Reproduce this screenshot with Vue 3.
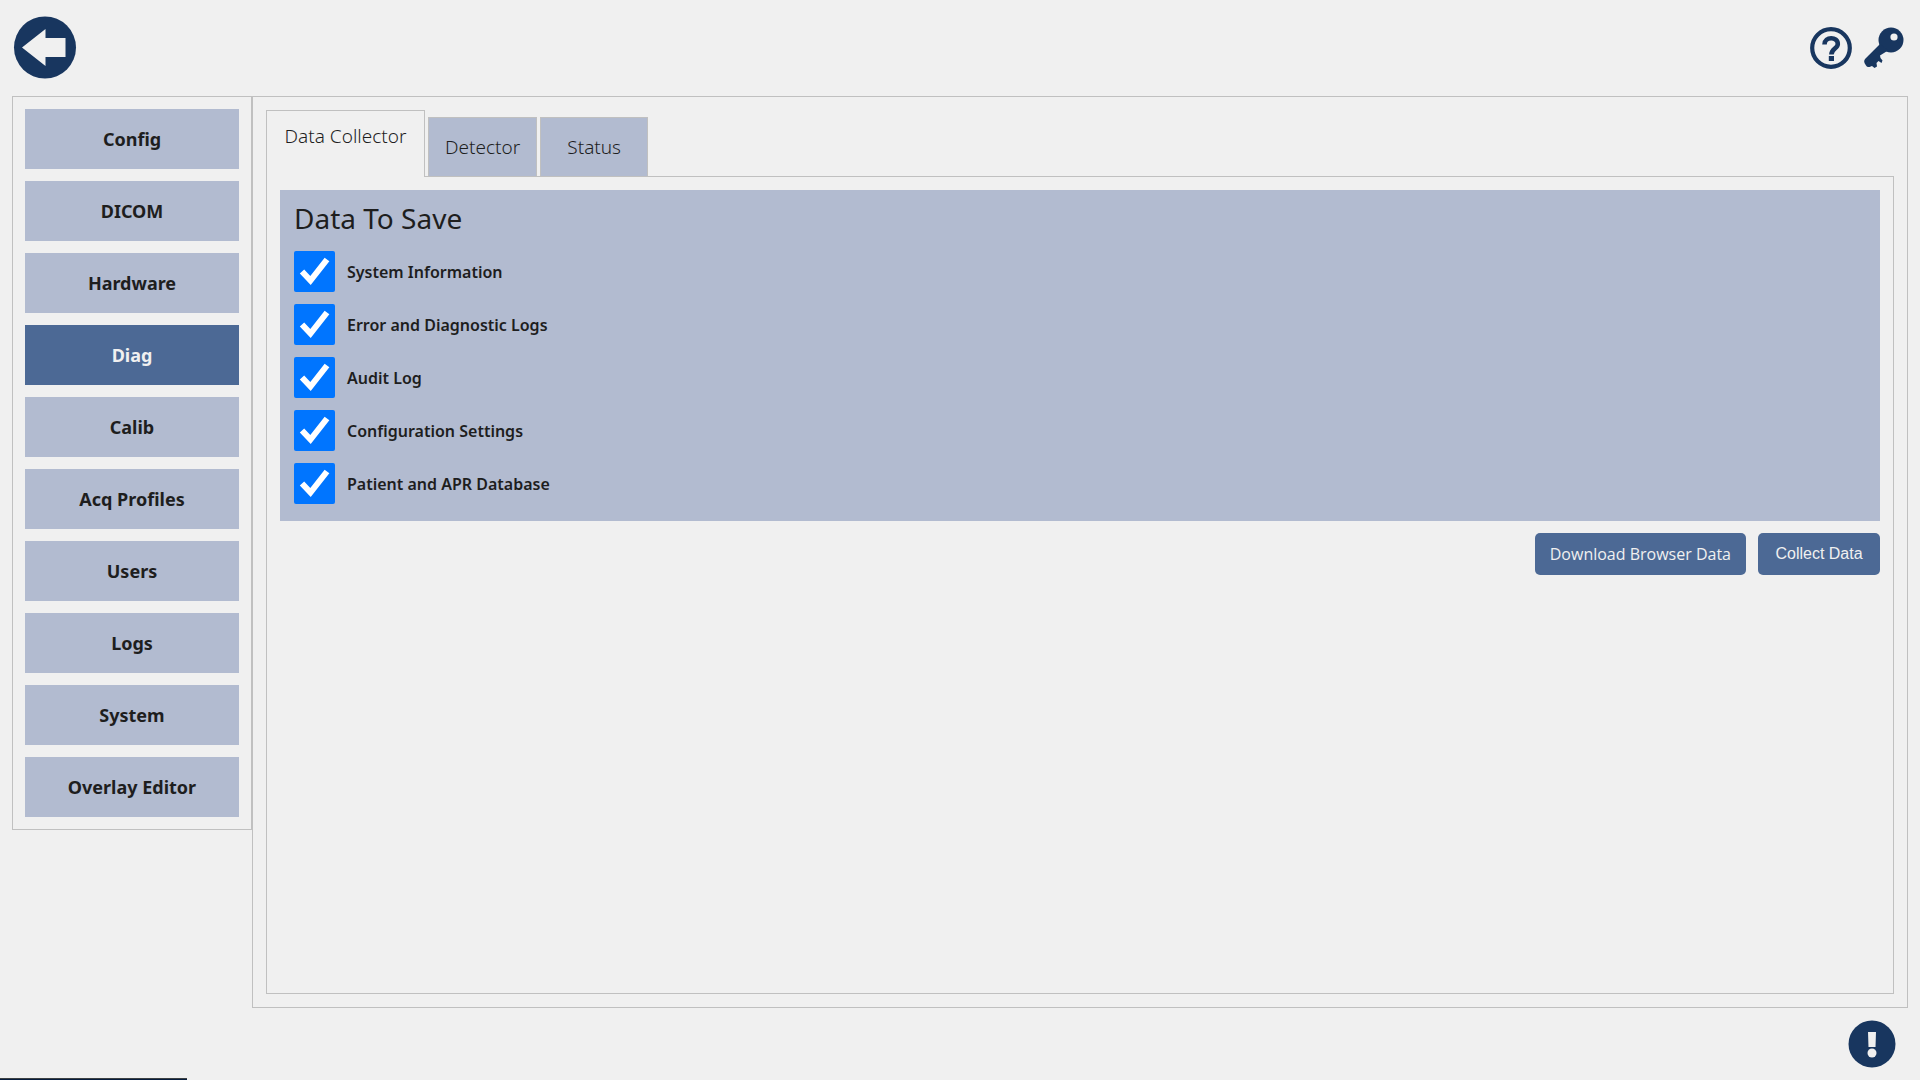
<script setup>
import { ref } from 'vue'

const sections = ['Config', 'DICOM', 'Hardware', 'Diag', 'Calib', 'Acq Profiles', 'Users', 'Logs', 'System', 'Overlay Editor']
const activeSection = ref('Diag')

const tabs = ['Data Collector', 'Detector', 'Status']
const activeTab = ref('Data Collector')

const options = ref([
  { id: 'system', label: 'System Information', checked: true },
  { id: 'logs', label: 'Error and Diagnostic Logs', checked: true },
  { id: 'audit', label: 'Audit Log', checked: true },
  { id: 'config', label: 'Configuration Settings', checked: true },
  { id: 'patient', label: 'Patient and APR Database', checked: true },
])
</script>

<template>
  <div class="page">
    <header class="topbar">
      <button class="icon-button" aria-label="Back">
        <svg width="64" height="64" viewBox="0 0 64 64">
          <circle cx="32" cy="31.500" r="31" fill="#18365f" />
          <path d="M9 31.500 32.500 13V22H52.500V41H32.500V50Z" fill="#f0f0f0" />
        </svg>
      </button>
      <div class="tools">
        <button class="icon-button" aria-label="Help">
          <svg width="42" height="42" viewBox="0 0 42 42">
            <circle cx="21" cy="21" r="18.800" fill="none" stroke="#18365f" stroke-width="4.200" />
            <path d="M14.500 17.500C14.500 9.300 27.800 9.300 27.800 17C27.800 21.500 21.400 21.800 21.400 27.500" fill="none" stroke="#18365f" stroke-width="4.600" />
            <rect x="18.800" y="29" width="5.200" height="5" fill="#18365f" />
          </svg>
        </button>
        <button class="icon-button" aria-label="Login">
          <svg width="42" height="42" viewBox="0 0 42 42">
            <g fill="#18365f">
              <circle cx="28" cy="13" r="12.500" />
              <path d="M17 17 2 32Q0.500 34 1.500 36L3 38.500Q4 40.500 6.500 40L9 39 11.500 41 14 39.500 13.500 36 15.500 34 18.500 36 19.500 33.500 17.500 31 17 28.500 25 23.500Z" />
            </g>
            <circle cx="31" cy="10" r="3.600" fill="#f0f0f0" />
          </svg>
        </button>
      </div>
    </header>

    <div class="body">
      <nav class="sidebar">
        <button
          v-for="name in sections"
          :key="name"
          class="section"
          :class="{ active: name === activeSection }"
          @click="activeSection = name"
        >{{ name }}</button>
      </nav>

      <main class="main">
        <div class="tabs" role="tablist">
          <button
            v-for="tab in tabs"
            :key="tab"
            class="tab"
            role="tab"
            :aria-selected="tab === activeTab"
            :class="{ active: tab === activeTab }"
            @click="activeTab = tab"
          >{{ tab }}</button>
        </div>
        <section class="panel">
          <div class="card">
            <h1>Data To Save</h1>
            <div class="options">
              <label v-for="option in options" :key="option.id" class="option" :for="option.id">
                <span class="tick">
                  <input :id="option.id" v-model="option.checked" type="checkbox" />
                  <svg v-if="option.checked" width="41" height="41" viewBox="0 0 41 41">
                    <path d="M8 20.500 16.500 29.500 33 8.500" fill="none" stroke="#fff" stroke-width="6" />
                  </svg>
                </span>
                {{ option.label }}
              </label>
            </div>
          </div>
          <div class="actions">
            <button class="action humanist">Download Browser Data</button>
            <button class="action">Collect Data</button>
          </div>
        </section>
      </main>
    </div>

    <footer class="footer">
      <button class="icon-button" aria-label="Alerts">
        <svg width="48" height="48" viewBox="0 0 48 48">
          <circle cx="24" cy="24" r="23.500" fill="#18365f" />
          <path d="M20 12H28L27.500 27H20.500Z" fill="#f0f0f0" />
          <circle cx="24" cy="33" r="4.500" fill="#f0f0f0" />
        </svg>
      </button>
    </footer>
    <div class="status-edge"></div>
  </div>
</template>

<style>
body {
  background: #f0f0f0;
}
</style>

<style scoped>
.page {
  position: relative;
  box-sizing: border-box;
  min-height: 100vh;
  display: flex;
  flex-direction: column;
  padding: 0 12px;
  background: #f0f0f0;
  color: #1e1e1e;
  font-family: "Noto Sans", "Open Sans", sans-serif;
}

button {
  margin: 0;
  border: 0;
  font-family: inherit;
  color: inherit;
  cursor: pointer;
}

.icon-button {
  padding: 0;
  background: none;
}

.icon-button svg {
  display: block;
}

.topbar {
  display: flex;
  align-items: center;
  justify-content: space-between;
  height: 96px;
  padding: 0 3px 0 1px;
}

.tools {
  display: flex;
  gap: 11px;
}

.body {
  flex: 1;
  display: flex;
  align-items: flex-start;
}

.sidebar {
  box-sizing: border-box;
  width: 240px;
  flex: none;
  display: flex;
  flex-direction: column;
  gap: 12px;
  padding: 12px;
  border: 1px solid #c0c0c0;
}

.section {
  height: 60px;
  padding: 0;
  background: #b2bbd0;
  font-size: 18px;
  font-weight: 700;
}

.section.active {
  background: #4c6995;
  color: #f0f0f0;
}

.main {
  flex: 1;
  align-self: stretch;
  display: flex;
  flex-direction: column;
  padding: 13px;
  border: 1px solid #c0c0c0;
}

.tabs {
  position: relative;
  z-index: 1;
  display: flex;
  align-items: flex-end;
  gap: 3px;
  margin-bottom: -1px;
}

.tab {
  box-sizing: border-box;
  height: 60px;
  min-width: 108px;
  padding: 0 16px;
  border: 1px solid #c0c0c0;
  background: #b2bbd0;
  font-size: 19px;
  font-weight: 300;
}

.tab.active {
  height: 67px;
  min-width: 159px;
  padding-bottom: 16px;
  border-bottom: 0;
  background: #f0f0f0;
}

.panel {
  flex: 1;
  padding: 13px;
  border: 1px solid #c0c0c0;
}

.card {
  padding: 8px 14px 17px;
  background: #b2bbd0;
}

h1 {
  margin: 0 0 12px;
  font-size: 28px;
  line-height: 41px;
  font-weight: 400;
}

.options {
  display: flex;
  flex-direction: column;
  gap: 12px;
}

.option {
  display: flex;
  align-items: center;
  gap: 12px;
  font-size: 16px;
  line-height: 24px;
  font-weight: 600;
}

.tick {
  display: grid;
}

.tick > * {
  grid-area: 1 / 1;
}

.tick input {
  appearance: none;
  width: 41px;
  height: 41px;
  margin: 0;
  border: 1px solid #767676;
  border-radius: 2px;
  background: #fff;
}

.tick input:checked {
  border: 0;
  background: #0075ff;
}

.tick svg {
  pointer-events: none;
}

.actions {
  display: flex;
  justify-content: flex-end;
  gap: 12px;
  margin-top: 12px;
}

.action {
  height: 42px;
  min-width: 122px;
  padding: 0 15px;
  border-radius: 5px;
  background: #4c6995;
  color: #f0f0f0;
  font-family: "Liberation Sans", Arial, sans-serif;
  font-size: 16px;
}

.action.humanist {
  font-family: "Open Sans", sans-serif;
}

.footer {
  display: flex;
  justify-content: flex-end;
  padding: 12px 12px 12px 0;
}

.status-edge {
  position: absolute;
  left: 0;
  bottom: 0;
  width: 187px;
  height: 1px;
  border-top: 1px solid #3c4043;
  background: #061c3c;
}
</style>
